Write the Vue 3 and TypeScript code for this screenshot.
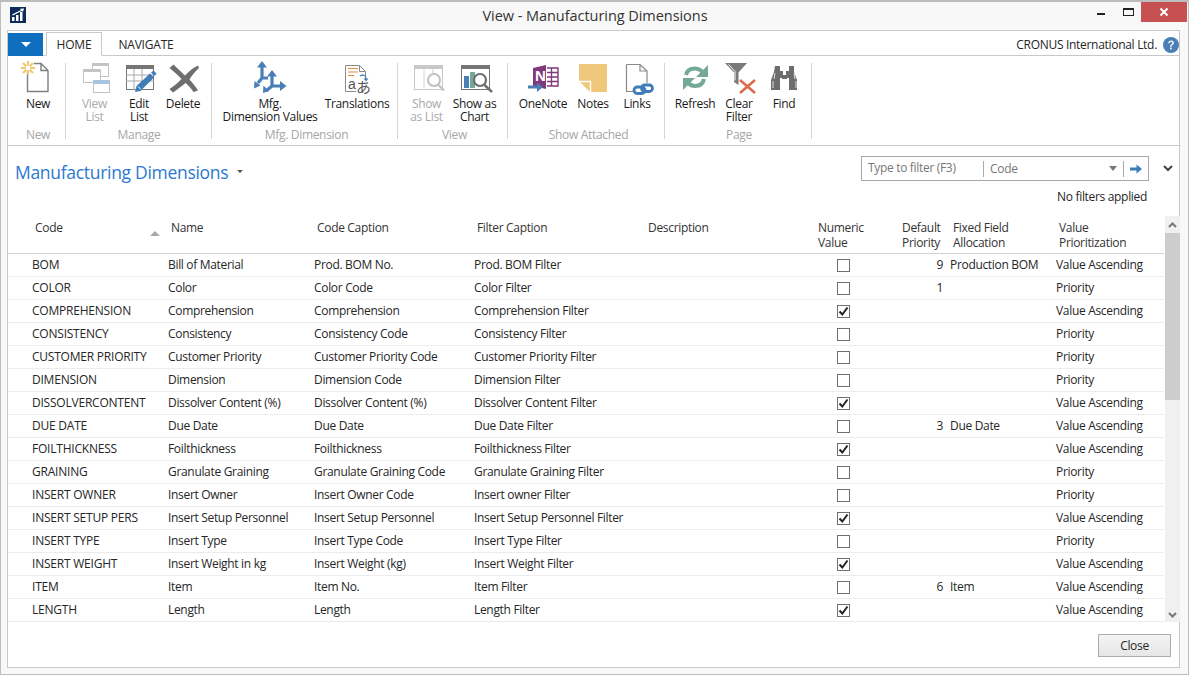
<script setup lang="ts">
interface Row { code: string; name: string; cap: string; filter: string; num: boolean; pri: string; fixed: string; val: string }
const r = (code: string, name: string, cap: string, filter: string, num: boolean, val: string, pri = '', fixed = ''): Row => ({ code, name, cap, filter, num, pri, fixed, val })
const VA = 'Value Ascending'
const P = 'Priority'
const rows: Row[] = [
  r('BOM', 'Bill of Material', 'Prod. BOM No.', 'Prod. BOM Filter', false, VA, '9', 'Production BOM'),
  r('COLOR', 'Color', 'Color Code', 'Color Filter', false, P, '1'),
  r('COMPREHENSION', 'Comprehension', 'Comprehension', 'Comprehension Filter', true, VA),
  r('CONSISTENCY', 'Consistency', 'Consistency Code', 'Consistency Filter', false, P),
  r('CUSTOMER PRIORITY', 'Customer Priority', 'Customer Priority Code', 'Customer Priority Filter', false, P),
  r('DIMENSION', 'Dimension', 'Dimension Code', 'Dimension Filter', false, P),
  r('DISSOLVERCONTENT', 'Dissolver Content (%)', 'Dissolver Content (%)', 'Dissolver Content Filter', true, VA),
  r('DUE DATE', 'Due Date', 'Due Date', 'Due Date Filter', false, VA, '3', 'Due Date'),
  r('FOILTHICKNESS', 'Foilthickness', 'Foilthickness', 'Foilthickness Filter', true, VA),
  r('GRAINING', 'Granulate Graining', 'Granulate Graining Code', 'Granulate Graining Filter', false, P),
  r('INSERT OWNER', 'Insert Owner', 'Insert Owner Code', 'Insert owner Filter', false, P),
  r('INSERT SETUP PERS', 'Insert Setup Personnel', 'Insert Setup Personnel', 'Insert Setup Personnel Filter', true, VA),
  r('INSERT TYPE', 'Insert Type', 'Insert Type Code', 'Insert Type Filter', false, P),
  r('INSERT WEIGHT', 'Insert Weight in kg', 'Insert Weight (kg)', 'Insert Weight Filter', true, VA),
  r('ITEM', 'Item', 'Item No.', 'Item Filter', false, VA, '6', 'Item'),
  r('LENGTH', 'Length', 'Length', 'Length Filter', true, VA),
]
</script>

<template>
  <div class="window">
    <header class="titlebar">
      <svg class="logo" width="16" height="16" viewBox="0 0 16 16">
        <rect width="16" height="16" fill="#0c2b5a" />
        <path d="M2 10h2.500v4H2zM6 8h2.500v6H6zM10 5h2.500v9H10z" fill="#fff" />
        <path d="M2 7.500 11 3l-1-1.200 4-.3-1 3.600-1-1.300-9 4.700z" fill="#fff" />
      </svg>
      <div class="title">View - Manufacturing Dimensions</div>
      <div class="winctl">
        <span class="wmin"></span>
        <span class="wmax"></span>
        <span class="wclose">
          <svg width="10" height="10" viewBox="0 0 10 10"><path d="M1.500 1.500l7 7M8.500 1.500l-7 7" stroke="#fff" stroke-width="2" /></svg>
        </span>
      </div>
    </header>

    <main class="panel">
      <nav class="tabs">
        <div class="appbtn"><span class="appcaret"></span></div>
        <div class="tab active">HOME</div>
        <div class="tab">NAVIGATE</div>
        <div class="company">CRONUS International Ltd.</div>
        <svg class="help" width="16" height="16" viewBox="0 0 16 16">
          <circle cx="8" cy="8" r="8" fill="#4a7eb6" />
          <path d="M5.200 6.200C5.300 4.400 6.500 3.400 8.100 3.400c1.700 0 2.800 1 2.800 2.400 0 1.100-.6 1.700-1.400 2.300-.7.500-.9.800-.9 1.600H7.100c0-1.200.3-1.700 1.100-2.300.7-.5 1.100-.9 1.100-1.500 0-.7-.5-1.200-1.200-1.200-.8 0-1.300.5-1.400 1.500z" fill="#fff" />
          <rect x="7.100" y="10.500" width="1.600" height="1.800" fill="#fff" />
        </svg>
      </nav>

      <section class="ribbon">
        <div class="group g-new">
          <div class="btns">
            <div class="rb w44">
              <svg class="ico" viewBox="0 0 32 32">
                <path d="M5.500 8V30.500H26V9.500L19 2.500H12M19 2.500V9.500H26" fill="#fff" stroke="#7f7f7f" stroke-width="1.400" />
                <g stroke="#f2c46d" stroke-width="2"><path d="M6 0v14M-1 7h14M1 2l10 10M11 2 1 12" /></g>
                <circle cx="6" cy="7" r="2.400" fill="#fff" />
              </svg>
              <span>New</span>
            </div>
          </div>
          <div class="glabel">New</div>
        </div>

        <div class="group g-manage">
          <div class="btns">
            <div class="rb w45 dis">
              <svg class="ico" viewBox="0 0 32 32">
                <rect x="13.500" y="2.500" width="16" height="13" fill="#fff" stroke="#c4c4c4" />
                <rect x="13" y="2" width="17" height="3" fill="#c4c4c4" />
                <rect x="4.500" y="8.500" width="17" height="13" fill="#fff" stroke="#c4c4c4" />
                <rect x="4" y="8" width="18" height="3" fill="#c4c4c4" />
                <rect x="14.500" y="19.500" width="16" height="12" fill="#fff" stroke="#c4c4c4" />
                <rect x="14" y="19" width="17" height="4" fill="#a9c4de" />
              </svg>
              <span>View<br />List</span>
            </div>
            <div class="rb w44">
              <svg class="ico" viewBox="0 0 32 32">
                <rect x="3.500" y="4.500" width="27" height="24" fill="#fff" stroke="#767676" />
                <rect x="3" y="4" width="28" height="4" fill="#767676" />
                <path d="M3 14h28M3 20h28M11 8v21M19 8v21" stroke="#a8a8a8" />
                <path d="M12 31l1.500-6L27 12.500l4 4L17.500 30z" fill="#3f7cb8" />
                <path d="M28 11.500l2.500-2 3 3-2 2.500z" fill="#3f7cb8" />
                <path d="M15 25.500l2.500 2.500" stroke="#fff" />
              </svg>
              <span>Edit<br />List</span>
            </div>
            <div class="rb w44">
              <svg class="ico" viewBox="0 0 32 32">
                <path d="M2.500 7 6.500 3.500C11 8 15 11.500 18 14.500 22 10 26 7 31 4.500L32 7C27.500 11 24.500 15 22.500 18.500 25.500 21.500 28.500 25.500 31 29.500L26.500 31C24 27 21 24 18.500 22 15 25 11 28 6 31.500L2.500 28C7.500 24.500 11.500 21.500 14.500 18 10.500 14 7 10.500 2.500 7z" fill="#6e6e6e" />
              </svg>
              <span>Delete</span>
            </div>
          </div>
          <div class="glabel">Manage</div>
        </div>

        <div class="group g-dim">
          <div class="btns">
            <div class="rb w108">
              <svg class="ico" viewBox="0 0 32 32" fill="none">
                <g stroke="#4a7eb6" stroke-width="3.200">
                  <path d="M8 17V5M8 17 4 22M8 17h6" />
                  <path d="M18 25V13M18 25l-6 5M18 25h10" />
                </g>
                <g fill="#4a7eb6">
                  <path d="M8 0l5 6.500H3zM.5 20l6 4.500-6.500 3zM18 9l5 6.500H13zM9 32l.4-7.500 5.600 5.500zM32.500 25l-6.500 5v-10z" />
                </g>
              </svg>
              <span>Mfg.<br />Dimension Values</span>
            </div>
            <div class="rb w66">
              <svg class="ico" viewBox="0 0 32 32">
                <path d="M4.500 4.500V30.500H15M24.500 18V10.500L18.500 4.500H4.500M18.500 4.500V10.500H24.500" fill="#fff" stroke="#8a8a8a" />
                <path d="M7 7.500h10M7 11h10M7 14.500h6" stroke="#e98a3a" stroke-width="1.200" />
                <path d="M19 15c3-2 6-1 6 3" fill="none" stroke="#4a7eb6" stroke-width="1.300" />
                <path d="M22.500 17.500h5l-2.500 3z" fill="#4a7eb6" />
                <text x="7" y="28" class="gl1">a</text>
                <text x="15" y="32" class="gl2">あ</text>
              </svg>
              <span>Translations</span>
            </div>
          </div>
          <div class="glabel">Mfg. Dimension</div>
        </div>

        <div class="group g-view">
          <div class="btns">
            <div class="rb w49 dis">
              <svg class="ico" viewBox="0 0 32 32" fill="none">
                <rect x="3.500" y="4.500" width="28" height="24" fill="#fff" stroke="#c8c8c8" />
                <rect x="3" y="4" width="29" height="4" fill="#c8c8c8" />
                <path d="M13 8v21M22 8v10" stroke="#d4d4d4" />
                <circle cx="23" cy="19" r="6" fill="#fff" stroke="#c0c0c0" stroke-width="2" />
                <path d="M27.500 24 33 29.500" stroke="#c0c0c0" stroke-width="2.200" />
              </svg>
              <span>Show<br />as List</span>
            </div>
            <div class="rb w47">
              <svg class="ico" viewBox="0 0 32 32" fill="none">
                <rect x="2.500" y="4.500" width="28" height="24" fill="#fff" stroke="#767676" />
                <rect x="2" y="4" width="29" height="4" fill="#767676" />
                <rect x="5" y="15" width="5" height="12" fill="#4a7eb6" />
                <rect x="11" y="11" width="5" height="16" fill="#74a898" />
                <circle cx="21" cy="19" r="6" fill="#fff" stroke="#6e6e6e" stroke-width="2.200" />
                <path d="M25.500 24 33 31" stroke="#6e6e6e" stroke-width="2.400" />
              </svg>
              <span>Show as<br />Chart</span>
            </div>
          </div>
          <div class="glabel">View</div>
        </div>

        <div class="group g-att">
          <div class="btns">
            <div class="rb w60">
              <svg class="ico" viewBox="0 0 32 32">
                <path d="M6 7 19 4V28L6 25z" fill="#80397b" />
                <path d="M20 7h11v18H20" fill="#fff" stroke="#80397b" stroke-width="1.400" />
                <path d="M24.500 7v18M20 11.500h11M20 16h11M20 20.500h11" stroke="#80397b" stroke-width="1.400" />
                <text x="7.800" y="20" class="gl3">N</text>
                <path d="M1 26h10" stroke="#4a7eb6" stroke-width="3" />
                <path d="M10 21.500l6 4.500-6 5z" fill="#4a7eb6" />
              </svg>
              <span>OneNote</span>
            </div>
            <div class="rb w40">
              <svg class="ico" viewBox="0 0 32 32">
                <path d="M2 3H30V31H13L2 20z" fill="#f0c87c" />
                <path d="M2.500 20.500H13.500V31" fill="none" stroke="#fff" stroke-width="1.400" />
              </svg>
              <span>Notes</span>
            </div>
            <div class="rb w48">
              <svg class="ico" viewBox="0 0 32 32" fill="none">
                <path d="M5.500 3.500V30.500H13M26 22V10L19 3.500H5.500M19 3.500V10H26" fill="#fff" stroke="#8a8a8a" stroke-width="1.200" />
                <g stroke="#3f7cb8" stroke-width="2.800">
                  <rect x="13" y="26" width="11" height="6.500" rx="3.200" />
                  <rect x="20.500" y="24" width="11" height="6.500" rx="3.200" />
                </g>
              </svg>
              <span>Links</span>
            </div>
          </div>
          <div class="glabel">Show Attached</div>
        </div>

        <div class="group g-page">
          <div class="btns">
            <div class="rb w44">
              <svg class="ico" viewBox="0 0 32 32" fill="none">
                <path d="M7 14C8 9 12 7.500 16 7.500c3 0 5 1 7 3" stroke="#74a898" stroke-width="4" />
                <path d="M29 4v12H17z" fill="#74a898" />
                <path d="M25 18c-1 5-5 7-9 7-3 0-5-1-7-3" stroke="#74a898" stroke-width="4" />
                <path d="M4 29V17h12z" fill="#74a898" />
              </svg>
              <span>Refresh</span>
            </div>
            <div class="rb w44">
              <svg class="ico" viewBox="0 0 32 32">
                <path d="M2 2h22l-8.500 9.500V24l-4.500-3V11.500z" fill="#7a7a7a" />
                <path d="M5.500 3.500 12 10.500v9" fill="none" stroke="#fff" stroke-width="1" />
                <path d="M17 19l15 13M32 19 17 32" stroke="#dd6b4d" stroke-width="2.600" />
              </svg>
              <span>Clear<br />Filter</span>
            </div>
            <div class="rb w46">
              <svg class="ico" viewBox="0 0 32 32">
                <path d="M7 5h5v5h3v4h3v-4h3V5h5v6l3 8v10H21V17h-2v1h-5v-1h-2v12H3V19l3-8z" fill="#6d6d6d" />
                <path d="M5 20v7M28 20v7M7 12l-1 6M26 12l1 6" stroke="#fff" stroke-width=".8" />
              </svg>
              <span>Find</span>
            </div>
          </div>
          <div class="glabel">Page</div>
        </div>
      </section>

      <section class="content">
        <div class="head">
          <div class="pagetitle">
            <h1>Manufacturing Dimensions</h1>
            <span class="titlecaret"></span>
          </div>
          <div class="filterwrap">
            <div class="filterrow">
              <div class="filterbox">
                <span class="f-type">Type to filter (F3)</span>
                <span class="f-code">Code</span>
                <span class="f-caret"></span>
                <span class="f-go">
                  <svg width="12" height="10" viewBox="0 0 12 10"><path d="M0 3.500h6.500V.5L12 5 6.500 9.500v-3H0z" fill="#3f7cb8" /></svg>
                </span>
              </div>
              <svg class="chev" width="10" height="7" viewBox="0 0 10 7"><path d="M1 1l4 4 4-4" fill="none" stroke="#444" stroke-width="2" /></svg>
            </div>
            <div class="nofilter">No filters applied</div>
          </div>
        </div>

        <div class="tablewrap">
          <div class="table">
            <div class="grid thead">
              <div class="th">Code<i class="sort"></i></div>
              <div class="th">Name</div>
              <div class="th">Code Caption</div>
              <div class="th">Filter Caption</div>
              <div class="th">Description</div>
              <div class="th">Numeric<br />Value</div>
              <div class="th">Default<br />Priority</div>
              <div class="th">Fixed Field<br />Allocation</div>
              <div class="th">Value<br />Prioritization</div>
            </div>
            <div v-for="row in rows" :key="row.code" class="grid tr">
              <div class="codecell">{{ row.code }}</div>
              <div>{{ row.name }}</div>
              <div>{{ row.cap }}</div>
              <div>{{ row.filter }}</div>
              <div></div>
              <div class="cbcell">
                <span class="cb">
                  <svg v-if="row.num" width="11" height="11" viewBox="0 0 11 11"><path d="M1.500 5.500 4.300 8.500 9.500 1.500" fill="none" stroke="#222" stroke-width="2" /></svg>
                </span>
              </div>
              <div class="pri">{{ row.pri }}</div>
              <div>{{ row.fixed }}</div>
              <div>{{ row.val }}</div>
            </div>
          </div>
          <div class="scroll">
            <svg width="9" height="6" viewBox="0 0 9 6" class="sup"><path d="M1 5l3.500-3.500L8 5" fill="none" stroke="#777" stroke-width="2" /></svg>
            <div class="thumb"></div>
            <svg width="9" height="6" viewBox="0 0 9 6" class="sdown"><path d="M1 1l3.500 3.500L8 1" fill="none" stroke="#777" stroke-width="2" /></svg>
          </div>
        </div>

        <div class="footer">
          <div class="closebtn">Close</div>
        </div>
      </section>
    </main>
  </div>
</template>

<style>
html, body { margin: 0; padding: 0; background: #fff; overflow: hidden; }
</style>

<style scoped>
* { box-sizing: border-box; }
.window {
  width: 1189px;
  height: 675px;
  background: #f8f8f8;
  border: 1px solid #bdbdbd;
  border-top-width: 2px;
  font-family: "Open Sans", "Noto Sans", sans-serif;
  font-size: 12px;
  letter-spacing: -0.32px;
  color: #262626;
  display: flex;
  flex-direction: column;
  padding: 0 8px 6px 6px;
}
.titlebar {
  height: 28px;
  flex: none;
  display: flex;
  align-items: flex-start;
  position: relative;
}
.logo { margin: 5px 0 0 3px; }
.title {
  position: absolute;
  left: 0;
  right: 0;
  top: 4px;
  text-align: center;
  font-size: 14.5px;
  line-height: 20px;
  letter-spacing: -0.05px;
  color: #333;
  padding-left: 3px;
}
.winctl {
  margin-left: auto;
  margin-right: -6px;
  display: flex;
  align-items: flex-start;
}
.wmin { width: 8px; height: 2px; background: #222; margin: 11px 18px 0 0; }
.wmax { width: 11px; height: 8px; border: 1px solid #222; border-top-width: 2px; margin: 6px 7px 0 0; }
.wclose {
  width: 46px;
  height: 20px;
  background: #c75050;
  display: flex;
  align-items: center;
  justify-content: center;
  margin-right: -1px;
}
.panel {
  flex: 1;
  background: #fff;
  border: 1px solid #c8c8c8;
  display: flex;
  flex-direction: column;
  min-height: 0;
}
.tabs {
  height: 25px;
  flex: none;
  display: flex;
  align-items: flex-end;
  background: #fff;
  border-bottom: 1px solid #c8c8c8;
}
.appbtn {
  width: 35px;
  height: 23px;
  background: #106ebe;
  display: flex;
  align-items: center;
  justify-content: center;
  margin-bottom: -1px;
}
.appcaret { border: 5px solid transparent; border-top: 5px solid #fff; border-bottom: 0; }
.tab {
  height: 24px;
  line-height: 25px;
  text-align: center;
  color: #262626;
  font-size: 12px;
  letter-spacing: -0.2px;
}
.tab.active {
  width: 56px;
  margin-left: 3px;
  border: 1px solid #c8c8c8;
  border-bottom: 1px solid #fff;
  margin-bottom: -1px;
  height: 24px;
  line-height: 24px;
  background: #fff;
}
.tab:not(.active) { width: 72px; margin-left: 8px; margin-bottom: -1px; }
.company { margin-left: auto; align-self: center; margin-top: 2px; letter-spacing: -0.3px; }
.help { margin: 3px 0 0 6px; align-self: center; }

.ribbon {
  height: 90px;
  flex: none;
  display: flex;
  background: #fff;
  border-bottom: 1px solid #c8c8c8;
  padding-top: 7px;
}
.group {
  height: 76px;
  border-right: 1px solid #d4d4d4;
  display: flex;
  flex-direction: column;
}
.btns { display: flex; height: 66px; flex: none; margin-top: -2px; }
.glabel {
  text-align: center;
  color: #a6a6a6;
  font-size: 12px;
  line-height: 16px;
  flex: none;
}
.g-new { width: 58px; padding-left: 8px; }
.g-new .glabel { width: 44px; }
.g-manage { width: 146px; padding-left: 6px; }
.g-manage .glabel { width: 134px; }
.g-dim { width: 186px; padding-left: 4px; }
.g-view { width: 110px; padding-left: 4px; }
.g-att { width: 157px; padding-left: 5px; }
.g-page { width: 147px; padding-left: 8px; }
.g-page .glabel { width: 132px; }
.rb {
  display: flex;
  flex-direction: column;
  align-items: center;
  text-align: center;
  line-height: 13px;
  color: #1a1a1a;
  white-space: nowrap;
  flex: none;
}
.rb span { margin-top: 4px; }
.rb.dis { color: #aaa; }
.ico { width: 32px; height: 32px; overflow: visible; flex: none; }
.w40 { width: 40px; }
.w44 { width: 44px; }
.w45 { width: 45px; }
.w46 { width: 46px; }
.w47 { width: 47px; }
.w48 { width: 48px; }
.w49 { width: 49px; }
.w60 { width: 60px; }
.w66 { width: 66px; }
.w108 { width: 108px; }
.gl1 { font: 14px "Liberation Sans", sans-serif; fill: #555; }
.gl2 { font: 15px "Noto Sans CJK JP", sans-serif; fill: #555; }
.gl3 { font: bold 14px "Open Sans", sans-serif; fill: #fff; }

.content { flex: 1; display: flex; flex-direction: column; min-height: 0; }
.head {
  height: 70px;
  flex: none;
  display: flex;
  justify-content: space-between;
  align-items: flex-start;
}
.pagetitle { display: flex; align-items: center; margin: 14px 0 0 7px; }
h1 {
  margin: 0;
  font-size: 17.5px;
  font-weight: 400;
  line-height: 24px;
  letter-spacing: -0.3px;
  color: #2b78cf;
}
.titlecaret {
  margin: 0 0 1px 9px;
  border: 3px solid transparent;
  border-top: 3px solid #555;
  border-bottom: 0;
}
.filterwrap { display: flex; flex-direction: column; align-items: flex-end; margin-top: 10px; margin-right: 4px; }
.filterrow { display: flex; align-items: center; }
.filterbox {
  width: 288px;
  height: 25px;
  border: 1px solid #a8a8a8;
  display: flex;
  align-items: center;
  position: relative;
  color: #777;
  padding-left: 6px;
}
.f-type { width: 116px; height: 16px; line-height: 14px; border-right: 1px solid #aaa; flex: none; }
.f-code { margin-left: 6px; flex: 1; }
.f-caret { border: 4px solid transparent; border-top: 5px solid #777; border-bottom: 0; margin-right: 6px; }
.f-go {
  width: 25px;
  height: 16px;
  border-left: 1px solid #aaa;
  display: flex;
  align-items: center;
  justify-content: center;
}
.chev { margin-left: 14px; margin-right: 2px; }
.nofilter { margin: 8px 28px 0 0; line-height: 16px; color: #262626; }

.tablewrap { height: 406px; flex: none; display: flex; }
.table { width: 1156px; flex: none; }
.grid {
  display: grid;
  grid-template-columns: 136px 146px 160px 171px 170px 84px 51px 106px 106px;
  padding-left: 24px;
}
.thead {
  height: 38px;
  border-bottom: 1px solid #d2d2d2;
  padding-top: 4px;
  line-height: 15px;
}
.th { padding-left: 3px; position: relative; color: #333; }
.sort {
  position: absolute;
  right: 8px;
  top: 11px;
  border: 5px solid transparent;
  border-top: 0;
  border-bottom: 5px solid #a9a9a9;
}
.tr { height: 23px; border-bottom: 1px solid #ececec; line-height: 22px; }
.tr > div { white-space: nowrap; }
.tr > .codecell { letter-spacing: -0.22px; }
.cbcell { display: flex; align-items: center; padding-left: 22px; }
.cb {
  width: 13px;
  height: 13px;
  border: 1px solid #707070;
  display: flex;
  align-items: center;
  justify-content: center;
  background: #fff;
}
.pri { text-align: right; padding-right: 7px; }
.scroll {
  width: 15px;
  flex: none;
  background: #f0f0f0;
  display: flex;
  flex-direction: column;
  align-items: center;
  margin-left: 1px;
}
.sup { margin-top: 6px; margin-bottom: 5px; flex: none; }
.thumb { width: 15px; height: 167px; background: #cdcdcd; flex: none; }
.sdown { margin-top: auto; margin-bottom: 4px; flex: none; }
.footer {
  flex: 1;
  display: flex;
  justify-content: flex-end;
  align-items: flex-start;
  padding: 12px 8px 0 0;
}
.closebtn {
  width: 73px;
  height: 23px;
  border: 1px solid #acacac;
  background: linear-gradient(#f4f4f4, #e6e6e6);
  text-align: center;
  line-height: 22px;
  color: #262626;
}
</style>
